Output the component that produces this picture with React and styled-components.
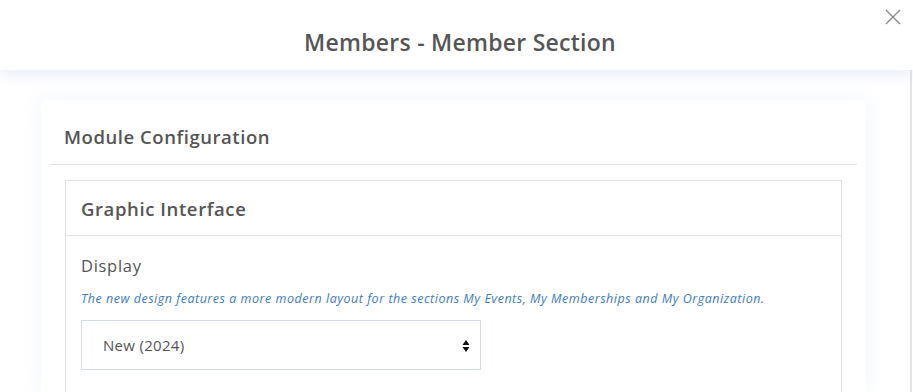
import React from 'react';
import styled, { createGlobalStyle } from 'styled-components';

const GlobalStyle = createGlobalStyle`
  html, body {
    margin: 0;
    padding: 0;
    background: #ffffff;
    font-family: 'Open Sans', Lato, sans-serif;
    color: #555555;
  }
  * {
    box-sizing: border-box;
  }
`;

const Modal = styled.div`
  position: relative;
  width: 913px;
  height: 392px;
  overflow: hidden;
  background: #ffffff;
`;

const Header = styled.header`
  position: relative;
  z-index: 2;
  height: 70px;
  display: flex;
  align-items: center;
  justify-content: center;
  padding-left: 7px;
  background: #ffffff;
  box-shadow: 0 4px 14px rgba(70, 100, 210, 0.13);
`;

const Title = styled.h1`
  margin: 0;
  padding-top: 14px;
  font-size: 23px;
  font-weight: 600;
  color: #555555;
  letter-spacing: 0.25px;
`;

const CloseButton = styled.button`
  position: absolute;
  top: 8px;
  right: 11px;
  width: 18px;
  height: 18px;
  padding: 0;
  border: none;
  background: transparent;
  cursor: pointer;
`;

const Body = styled.div`
  height: 322px;
  padding: 30px 0 0 41px;
  border-right: 2px solid #e6e6e6;
  margin-right: 1px;
`;

const Card = styled.section`
  width: 825px;
  height: 100%;
  padding: 0 9px;
  background: #ffffff;
  border-radius: 6px 6px 0 0;
  box-shadow: 0 0 22px rgba(90, 130, 255, 0.09);
`;

const CardHeader = styled.div`
  height: 65px;
  display: flex;
  align-items: center;
  padding: 8px 0 0 14px;
  border-bottom: 1px solid #e2e2e2;
`;

const CardTitle = styled.h2`
  margin: 0;
  font-size: 18.5px;
  font-weight: 600;
  color: #555555;
  letter-spacing: 0.55px;
`;

const Panel = styled.div`
  margin: 15px 15px 0;
  border: 1px solid #e0e0e0;
  border-bottom: none;
  height: 220px;
`;

const PanelHeader = styled.div`
  height: 55px;
  display: flex;
  align-items: center;
  padding: 0 0 0 15px;
  border-bottom: 1px solid #e2e2e2;
`;

const PanelTitle = styled.h3`
  margin: 0;
  font-size: 18.5px;
  font-weight: 600;
  color: #555555;
  letter-spacing: 0.6px;
`;

const PanelBody = styled.div`
  padding: 19px 15px 0;
`;

const Label = styled.div`
  font-size: 16.5px;
  font-weight: 500;
  color: #555555;
  line-height: 22px;
  letter-spacing: 0.7px;
`;

const Hint = styled.p`
  margin: 13px 0 0;
  font-size: 12.5px;
  font-style: italic;
  color: #3d7cc2;
  line-height: 18px;
  letter-spacing: 0.52px;
`;

const SelectBox = styled.div`
  position: relative;
  margin-top: 12px;
  width: 400px;
  height: 50px;
  display: flex;
  align-items: center;
  padding: 0 21px;
  border: 1px solid #d3dcea;
  font-size: 15px;
  color: #555555;
  letter-spacing: 0.3px;
`;

const Arrows = styled.svg`
  position: absolute;
  right: 10px;
  top: 18px;
`;

export default function App() {
  return (
    <>
      <GlobalStyle />
      <Modal>
        <Header>
          <Title>Members - Member Section</Title>
          <CloseButton aria-label="Close">
            <svg width="18" height="18" viewBox="0 0 18 18">
              <path d="M2 2 L16 16 M16 2 L2 16" stroke="#8a8a8a" strokeWidth="1.4" fill="none" />
            </svg>
          </CloseButton>
        </Header>
        <Body>
          <Card>
            <CardHeader>
              <CardTitle>Module Configuration</CardTitle>
            </CardHeader>
            <Panel>
              <PanelHeader>
                <PanelTitle>Graphic Interface</PanelTitle>
              </PanelHeader>
              <PanelBody>
                <Label>Display</Label>
                <Hint>
                  The new design features a more modern layout for the sections My Events, My Memberships and My Organization.
                </Hint>
                <SelectBox>
                  New (2024)
                  <Arrows width="8" height="14" viewBox="0 0 8 14">
                    <path d="M4 1 L7.5 6 H0.5 Z M4 13 L7.5 8 H0.5 Z" fill="#111" />
                  </Arrows>
                </SelectBox>
              </PanelBody>
            </Panel>
          </Card>
        </Body>
      </Modal>
    </>
  );
}
